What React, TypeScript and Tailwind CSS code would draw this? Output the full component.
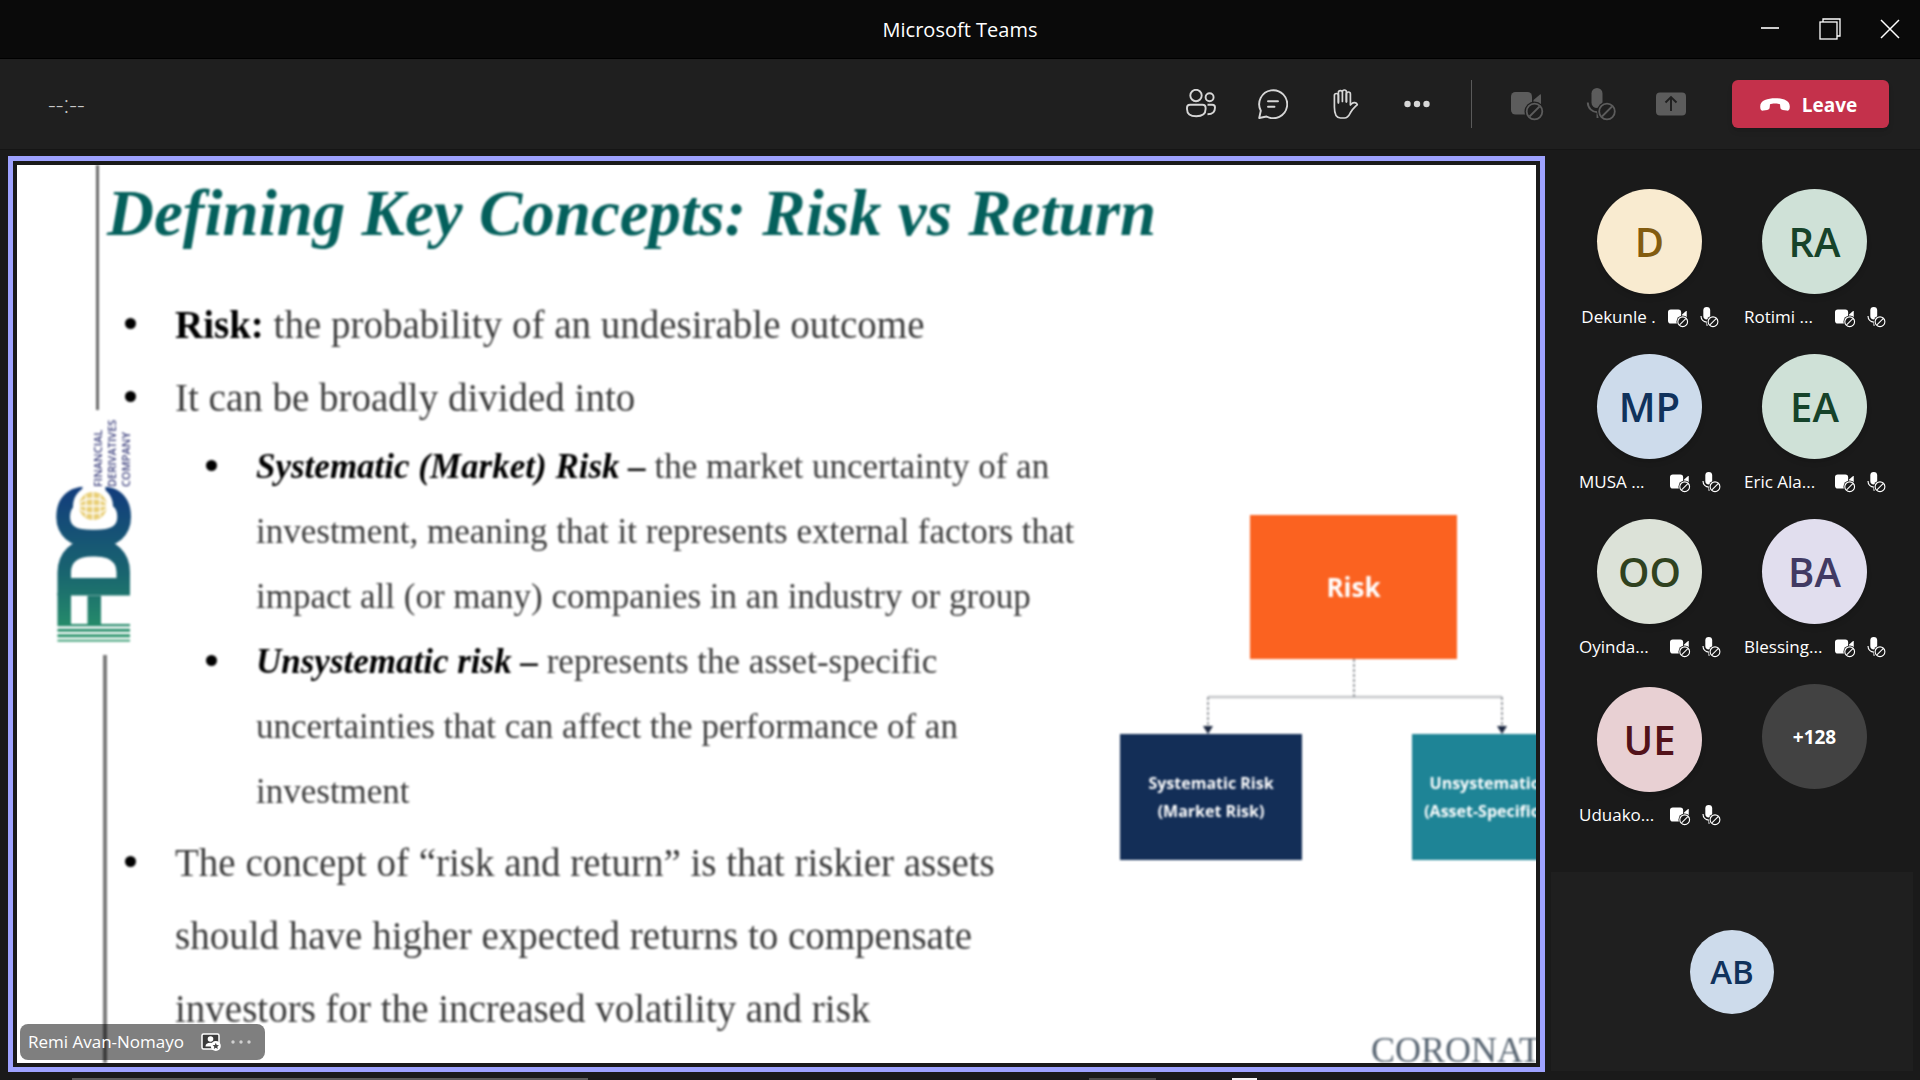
import React from "react";

type Participant = { initials: string; name: string; tone: string };

const participants: Participant[] = [
  { initials: "D", name: "Dekunle .", tone: "bg-[#f9ebd0] text-[#835c10]" },
  { initials: "RA", name: "Rotimi ...", tone: "bg-[#cfe1d7] text-[#16432a]" },
  { initials: "MP", name: "MUSA ...", tone: "bg-[#cddbeb] text-[#10325c]" },
  { initials: "EA", name: "Eric Ala...", tone: "bg-[#cfe1d7] text-[#16432a]" },
  { initials: "OO", name: "Oyinda...", tone: "bg-[#dce2d8] text-[#30421f]" },
  { initials: "BA", name: "Blessing...", tone: "bg-[#e1deee] text-[#413a63]" },
  { initials: "UE", name: "Uduako...", tone: "bg-[#e8d0d3] text-[#52121a]" },
];

function Blocked({ cx, cy, cut }: { cx: number; cy: number; cut: string }) {
  return (
    <>
      <circle cx={cx} cy={cy} r="10" fill={cut} />
      <circle cx={cx} cy={cy} r="7.8" fill="none" stroke="currentColor" strokeWidth="1.8" />
      <path d={`M${cx - 5} ${cy + 5} L${cx + 5} ${cy - 5}`} stroke="currentColor" strokeWidth="1.8" />
    </>
  );
}

function CameraOff({ className, cut }: { className: string; cut: string }) {
  return (
    <svg viewBox="0 0 32 32" className={className} aria-hidden="true">
      <rect x="0" y="4" width="21" height="22.500" rx="4.500" fill="currentColor" />
      <path d="M22.500 12 L29 6.500 Q30 6 30 7.200 V20 H22.500 Z" fill="currentColor" />
      <Blocked cx={23.5} cy={23.5} cut={cut} />
    </svg>
  );
}

function MicOff({ className, cut }: { className: string; cut: string }) {
  return (
    <svg viewBox="0 0 32 32" className={className} aria-hidden="true">
      <rect x="8.500" y="0" width="11" height="20" rx="5.500" fill="currentColor" />
      <path d="M4.800 14.500 C4.800 20 9 24 14.500 24.300 V30" fill="none" stroke="currentColor" strokeWidth="1.900" />
      <Blocked cx={24} cy={23.5} cut={cut} />
    </svg>
  );
}

function ToolButton({ label, disabled, children }: { label: string; disabled?: boolean; children: React.ReactNode }) {
  return (
    <button
      type="button"
      aria-label={label}
      disabled={disabled}
      className="flex h-12 w-[72px] items-center justify-center text-[#d6d6d6] disabled:text-[#5c5c5c]"
    >
      {children}
    </button>
  );
}

function TitleBar() {
  return (
    <header className="grid h-[59px] grid-cols-[1fr_auto_1fr] items-center border-b border-black bg-[#0a0a0a]">
      <h1 className="col-start-2 pt-0.5 text-xl leading-7 text-white">Microsoft Teams</h1>
      <div className="flex justify-end text-white">
        <button type="button" aria-label="Minimize" className="flex h-14 w-[60px] items-center justify-center">
          <svg width="22" height="22" viewBox="0 0 22 22"><path d="M2 10 H20" stroke="currentColor" strokeWidth="1.600" /></svg>
        </button>
        <button type="button" aria-label="Restore" className="flex h-14 w-[60px] items-center justify-center">
          <svg width="22" height="22" viewBox="0 0 22 22" fill="none" stroke="currentColor" strokeWidth="1.300">
            <rect x="1" y="4" width="17" height="17" />
            <path d="M4 4 V1 H21 V18 H18" />
          </svg>
        </button>
        <button type="button" aria-label="Close" className="flex h-14 w-[60px] items-center justify-center">
          <svg width="22" height="22" viewBox="0 0 22 22" stroke="currentColor" strokeWidth="1.500">
            <path d="M2 2 L20 20 M20 2 L2 20" />
          </svg>
        </button>
      </div>
    </header>
  );
}

function Toolbar() {
  return (
    <div className="flex h-[91px] items-center border-b border-[#151515] bg-[#1f1f1f] pr-[31px] pl-12">
      <span className="mr-auto text-2xl font-light text-[#c8c8c8]">--:--</span>
      <ToolButton label="Show participants">
        <svg width="30" height="30" viewBox="0 0 30 30" fill="none" stroke="currentColor" strokeWidth="1.900">
          <circle cx="10" cy="6.500" r="5.700" />
          <circle cx="23.600" cy="8.300" r="4" />
          <path d="M4 15.700 H16.500 Q19.600 15.700 19.600 18.700 V20 Q19.600 27.200 10.300 27.200 Q1 27.200 1 20 V18.700 Q1 15.700 4 15.700 Z" />
          <path d="M21.500 15.700 H26.300 Q29 15.700 29 18.500 Q29 25.300 21.500 25.300" />
        </svg>
      </ToolButton>
      <ToolButton label="Show conversation">
        <svg width="30" height="30" viewBox="0 0 30 30" fill="none" stroke="currentColor" strokeWidth="1.900" strokeLinejoin="round">
          <path d="M1.200 29 L2.800 21.700 A14 14 0 1 1 8.500 27.500 Z" />
          <path d="M10 12.200 H20 M10 17.700 H16.500" strokeLinecap="round" />
        </svg>
      </ToolButton>
      <ToolButton label="Raise your hand">
        <svg width="30" height="30" viewBox="0 0 30 30" fill="none" stroke="currentColor" strokeWidth="1.700" strokeLinecap="round" strokeLinejoin="round">
          <path d="M8.400 14 V6.500 a2 2 0 0 0 -4 0 V18 C4.400 24 6 29 10.500 29 H14.500 C18 29 19 26.500 20.500 23.500 C22.500 20 25 18 27.300 15.600 C26.500 13.300 23.500 13.200 21.800 14.600 L20.400 16 V5 a2 2 0 0 0 -4 0 V13" />
          <path d="M8.400 13 V3.600 a2 2 0 0 1 4 0 V12.500 M12.400 12 V3 a2 2 0 0 1 4 0 V12.500" />
        </svg>
      </ToolButton>
      <ToolButton label="More actions">
        <svg width="30" height="30" viewBox="0 0 30 30" fill="currentColor">
          <circle cx="5.500" cy="15" r="3.200" />
          <circle cx="15" cy="15" r="3.200" />
          <circle cx="24.500" cy="15" r="3.200" />
        </svg>
      </ToolButton>
      <div className="mr-[19px] ml-[18px] h-12 w-px bg-[#5a5a5a]" />
      <ToolButton label="Camera is disabled" disabled>
        <CameraOff className="size-8 overflow-visible" cut="#1f1f1f" />
      </ToolButton>
      <ToolButton label="Microphone is disabled" disabled>
        <MicOff className="size-8 overflow-visible" cut="#1f1f1f" />
      </ToolButton>
      <ToolButton label="Share content" disabled>
        <svg width="30" height="30" viewBox="0 0 30 30">
          <rect x="0" y="3.500" width="30" height="23" rx="4" fill="currentColor" />
          <path d="M15 22 V8.500 M9.500 13.500 L15 8 L20.500 13.500" fill="none" stroke="#1f1f1f" strokeWidth="1.900" />
        </svg>
      </ToolButton>
      <button type="button" className="ml-[25px] flex h-12 w-[157px] items-center justify-center gap-3 rounded-md bg-[#c4314b] pt-0.5 pr-1 text-[19px] font-bold text-white shadow-md">
        <svg width="30" height="14" viewBox="0 0 30 14" fill="currentColor" aria-hidden="true">
          <path d="M.2 8.500 C.2 2 8 .2 15 .2 S29.800 2 29.800 8.500 C29.800 12 28.800 12.800 26.500 12.600 L22.800 12 C20.800 11.700 20.500 10.800 20.300 9.300 L20 6.300 C18.800 5.700 17.300 5.500 15 5.500 S11.200 5.700 10 6.300 L9.700 9.300 C9.500 10.800 9.200 11.700 7.200 12 L3.500 12.600 C1.200 12.800 .2 12 .2 8.500 Z" />
        </svg>
        Leave
      </button>
    </div>
  );
}

function CompanyLogo() {
  return (
    <svg width="88" height="225" viewBox="0 0 88 225" className="overflow-visible" role="img" aria-label="Financial Derivatives Company">
      <defs>
        <linearGradient id="mark" x1="0" y1="0" x2="1" y2="0">
          <stop offset="0" stopColor="#2a9a68" />
          <stop offset="0.450" stopColor="#19656f" />
          <stop offset="1" stopColor="#123b7d" />
        </linearGradient>
      </defs>
      <g transform="translate(113 223) rotate(-90)">
        <text x="-4 42 92" y="0" fontFamily="Roboto" fontWeight="900" fontSize="102" fill="url(#mark)">FDC</text>
        <path d="M4.500 0 V-76 M10 0 V-76 M15.500 0 V-76" stroke="#ffffff" strokeWidth="2.500" />
        <circle cx="137" cy="-37" r="20" fill="#ffffff" />
        <circle cx="137" cy="-37" r="14" fill="#e9cf78" />
        <path d="M123 -37 H151 M137 -51 V-23 M126 -44 H148 M126 -30 H148" stroke="#ffffff" strokeWidth="1.300" fill="none" />
        <ellipse cx="137" cy="-37" rx="7.500" ry="14" stroke="#ffffff" strokeWidth="1.300" fill="none" />
        <g fontFamily="Open Sans" fontWeight="600" fontSize="11" fill="#3b3f7c">
          <text x="156" y="-28">FINANCIAL</text>
          <text x="156" y="-14">DERIVATIVES</text>
          <text x="156" y="0">COMPANY</text>
        </g>
      </g>
    </svg>
  );
}

function Bullet({ children }: { children: React.ReactNode }) {
  return (
    <li className="flex text-[39px] leading-[73px]">
      <Dot tall />
      <div>{children}</div>
    </li>
  );
}

function SubBullet({ children }: { children: React.ReactNode }) {
  return (
    <li className="flex text-[35px] leading-[65px]">
      <Dot />
      <div>{children}</div>
    </li>
  );
}

function Dot({ tall }: { tall?: boolean }) {
  return (
    <span className={tall ? "flex h-[71px] w-[50px] shrink-0 items-center" : "flex h-[63px] w-[50px] shrink-0 items-center"}>
      <span className="size-[11px] rounded-full bg-black" />
    </span>
  );
}

function SlideText() {
  return (
    <div className="shrink-0 font-['Liberation_Serif',serif] whitespace-nowrap text-[#3c3c3c]">
      <h2 className="h-[123px] pl-0.5 text-[65px] leading-[96px] font-bold text-[#04605c] italic">
        Defining Key Concepts: Risk vs Return
      </h2>
      <ul className="pl-5">
        <Bullet><b className="text-black">Risk:</b> the probability of an undesirable outcome</Bullet>
        <Bullet>It can be broadly divided into</Bullet>
        <li>
          <ul className="mb-0.5 pl-[81px]">
            <SubBullet>
              <b className="text-black italic">Systematic (Market) Risk –</b> the market uncertainty of an<br />
              investment, meaning that it represents external factors that<br />
              impact all (or many) companies in an industry or group
            </SubBullet>
            <SubBullet>
              <b className="text-black italic">Unsystematic risk –</b> represents the asset-specific<br />
              uncertainties that can affect the performance of an<br />
              investment
            </SubBullet>
          </ul>
        </li>
        <Bullet>
          The concept of “risk and return” is that riskier assets<br />
          should have higher expected returns to compensate<br />
          investors for the increased volatility and risk
        </Bullet>
      </ul>
    </div>
  );
}

function RiskDiagram() {
  return (
    <div className="w-[474px] pt-[350px] font-['Open_Sans',sans-serif] font-bold whitespace-nowrap text-white">
      <div className="ml-[130px] flex h-36 w-[207px] items-center justify-center bg-[#fb6220] text-[26px]">Risk</div>
      <svg width="474" height="75" viewBox="0 0 474 75" className="block" aria-hidden="true">
        <path d="M88 38 H382" stroke="#c4c6c9" strokeWidth="2.500" />
        <path d="M234 0 V38 M88 38 V68 M382 38 V68" stroke="#9b9ea3" strokeWidth="2" strokeDasharray="3 2" />
        <path d="M83 67 H93 L88 75 Z M377 67 H387 L382 75 Z" fill="#1b2740" />
      </svg>
      <div className="flex justify-between text-center text-base leading-7">
        <div className="flex h-[126px] w-[182px] items-center justify-center bg-[#132e57]">Systematic Risk<br />(Market Risk)</div>
        <div className="flex h-[126px] w-[182px] items-center justify-center bg-[#1e8496]">Unsystematic Risk<br />(Asset-Specific Risk)</div>
      </div>
    </div>
  );
}

function SharedScreen() {
  return (
    <section aria-label="Shared content" className="min-w-0 flex-1 border-5 border-[#9ea2ff] p-1">
      <div className="relative h-full min-h-[898px] overflow-hidden bg-white">
        <div className="absolute inset-0 flex blur-[1px]">
          <div className="flex w-[88px] shrink-0 flex-col">
            <div className="ml-[79px] h-[245px] w-[3px] bg-[#6a6a6a]" />
            <div className="pt-2.5 pb-2.5"><CompanyLogo /></div>
            <div className="ml-[86px] w-1 flex-1 bg-[#7a7a7a]" />
          </div>
          <SlideText />
        </div>
        <div className="absolute top-0 left-[1103px] blur-[1px]"><RiskDiagram /></div>
        <p className="absolute bottom-0 left-[1354px] font-['Liberation_Serif',serif] text-4xl leading-[26px] text-[#586572] blur-[1px]">CORONATION</p>
        <div className="absolute bottom-[3px] left-[3px] flex h-9 w-[245px] items-center rounded-lg bg-black/50 px-2 text-[17px] text-white">
          <span className="whitespace-nowrap">Remi Avan-Nomayo</span>
          <svg width="20" height="20" viewBox="0 0 20 20" className="ml-auto" aria-hidden="true">
            <rect x="1" y="2" width="17" height="15" rx="1.500" fill="#3b3b3b" stroke="#fff" strokeWidth="1.500" />
            <circle cx="9.500" cy="7" r="2.800" fill="#fff" />
            <path d="M4.500 14.500 Q4.500 10.800 9.500 10.800 T14.500 14.500 Z" fill="#fff" />
            <circle cx="14.800" cy="14" r="5" fill="#fff" />
            <path d="M14.800 10.800 L15.700 13 L18 13.200 L16.300 14.700 L16.800 17 L14.800 15.700 L12.800 17 L13.300 14.700 L11.600 13.200 L13.900 13 Z" fill="#444" />
          </svg>
          <button type="button" aria-label="More options" className="mr-1.5 ml-2.5">
            <svg width="20" height="6" viewBox="0 0 20 6" fill="#d0d0d0">
              <circle cx="2" cy="3" r="1.700" />
              <circle cx="10" cy="3" r="1.700" />
              <circle cx="18" cy="3" r="1.700" />
            </svg>
          </button>
        </div>
      </div>
    </section>
  );
}

function Tile({ person, last }: { person: Participant; last: boolean }) {
  return (
    <li className={last ? "flex h-[168px] flex-col items-center pt-[3px]" : "flex h-[165px] flex-col items-center"}>
      <div className={`flex size-[105px] items-center justify-center rounded-full text-[40px] font-semibold shadow-md ${person.tone}`}>
        {person.initials}
      </div>
      <div className="mt-2.5 flex h-[26px] items-center text-[17px] text-white">
        <span className={person.name === "Dekunle ." ? "whitespace-nowrap" : "w-[79px] whitespace-nowrap"}>{person.name}</span>
        <CameraOff className="ml-3 size-5 overflow-visible" cut="#1a1a1a" />
        <MicOff className="ml-2.5 size-5 overflow-visible" cut="#1a1a1a" />
      </div>
    </li>
  );
}

function Sidebar() {
  return (
    <aside className="mr-[7px] ml-1.5 flex w-[362px] shrink-0 flex-col">
      <ul className="grid grid-cols-[165px_165px] pt-[33px] pl-4">
        {participants.map((person, i) => (
          <Tile key={person.initials} person={person} last={i === participants.length - 1} />
        ))}
        <li className="flex justify-center">
          <button type="button" className="size-[105px] rounded-full bg-[#424242] pt-0.5 text-[19px] font-bold text-white">+128</button>
        </li>
      </ul>
      <div className="mt-auto mb-px flex h-[199px] items-center justify-center bg-[#1f1f1f]">
        <div className="flex size-[84px] items-center justify-center rounded-full bg-[#cddbeb] text-[33px] font-semibold text-[#10325c]">AB</div>
      </div>
    </aside>
  );
}

export default function App() {
  return (
    <div className="flex min-h-screen flex-col bg-[#1a1a1a] font-['Open_Sans','Noto_Sans',sans-serif]">
      <TitleBar />
      <Toolbar />
      <main className="flex flex-1 pt-1.5 pb-1.5 pl-2">
        <SharedScreen />
        <Sidebar />
      </main>
      <div className="flex h-0.5">
        <div className="ml-[72px] w-[516px] bg-[#5c5c5c]" />
        <div className="ml-[501px] w-[67px] bg-[#4a4a4a]" />
        <div className="ml-[76px] w-[25px] bg-[#f2f2f2]" />
      </div>
    </div>
  );
}
